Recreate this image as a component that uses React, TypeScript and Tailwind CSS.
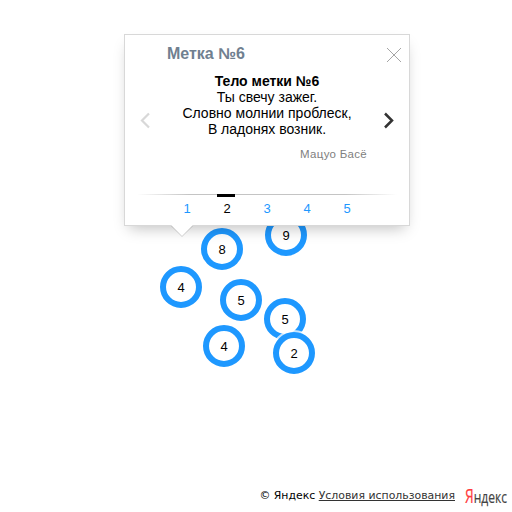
import React from 'react';

type Cluster = { x: number; y: number; count: number };

const clusters: Cluster[] = [
  { x: 286, y: 235, count: 9 },
  { x: 222, y: 249, count: 8 },
  { x: 181, y: 287, count: 4 },
  { x: 241, y: 300, count: 5 },
  { x: 285, y: 319, count: 5 },
  { x: 224, y: 346, count: 4 },
  { x: 294, y: 353, count: 2 },
];

function ClusterPin({ x, y, count }: Cluster) {
  return (
    <div
      className="absolute flex size-[42px] -translate-x-1/2 -translate-y-1/2 items-center justify-center rounded-full border-[6px] border-[#1e98ff] bg-white pt-px text-[13px] leading-none text-black shadow-[0_0_0_2px_rgba(255,255,255,0.75)]"
      style={{ left: x, top: y }}
    >
      {count}
    </div>
  );
}

function Pager() {
  return (
    <div className="mx-[12px]">
      <div className="h-px bg-[linear-gradient(to_right,transparent,#c4c4c4_20%,#c4c4c4_80%,transparent)]" />
      <ul className="flex justify-center text-[13px] leading-[15px]">
        {[1, 2, 3, 4, 5].map((n) => (
          <li key={n} className="flex w-10 flex-col items-center">
            <span className={n === 2 ? '-mt-px mr-[2px] h-[3px] w-[18px] bg-black' : '-mt-px h-[3px] w-[18px]'} />
            <span className={n === 2 ? 'mt-[4px] text-black' : 'mt-[4px] text-[#1e98ff]'}>{n}</span>
          </li>
        ))}
      </ul>
    </div>
  );
}

function Balloon() {
  return (
    <section className="absolute left-[124px] top-[34px] flex h-[192px] w-[286px] flex-col border border-[#d8d8d8] bg-white shadow-[0_7px_14px_-5px_rgba(0,0,0,0.26)]">
      <header className="flex h-[37px] items-start justify-between pl-[42px] pr-[8px]">
        <h1 className="pt-[9px] text-[16px] font-bold leading-[20px] text-[#708090]">Метка №6</h1>
        <svg className="mt-[13px]" width="14" height="14" viewBox="0 0 14 14" fill="none" stroke="#a5a5a5">
          <path d="M0 0L14 14M14 0L0 14" />
        </svg>
      </header>
      <div className="flex h-[122px] items-start">
        <div className="flex w-[42px] shrink-0 pl-[15px] pt-[40px]">
          <svg width="10" height="17" viewBox="0 0 10 17" fill="none" stroke="#d8d8d8" strokeWidth="2.2">
            <path d="M9 1.5L2 8.5L9 15.5" />
          </svg>
        </div>
        <div className="w-[200px] pt-px text-center text-[14px] leading-[16px] text-black">
          <p className="font-bold">Тело метки №6</p>
          <p>Ты свечу зажег.</p>
          <p className="whitespace-nowrap">Словно молнии проблеск,</p>
          <p>В ладонях возник.</p>
          <p className="mt-[9px] text-right text-[11.49px] tracking-[0.3px] text-[#808080]">Мацуо Басё</p>
        </div>
        <div className="flex w-[42px] shrink-0 justify-end pr-[15px] pt-[40px]">
          <svg width="10" height="17" viewBox="0 0 10 17" fill="none" stroke="#333" strokeWidth="2.5">
            <path d="M1 1.5L8 8.5L1 15.5" />
          </svg>
        </div>
      </div>
      <Pager />
      <svg className="absolute left-[46px] top-[190px]" width="22" height="12" viewBox="0 0 22 12">
        <path d="M0 0H22L11 11Z" fill="#fff" />
        <path d="M0 .5L11 11.5L22 .5" fill="none" stroke="#000" strokeOpacity=".16" />
      </svg>
    </section>
  );
}

export default function App() {
  return (
    <main className="relative flex h-[512px] w-[512px] flex-col justify-end overflow-hidden bg-white font-['Liberation_Sans',Arial,sans-serif]">
      {clusters.map((c) => (
        <ClusterPin key={`${c.x}-${c.y}`} {...c} />
      ))}
      <Balloon />
      <footer className="flex h-[26px] items-start justify-end pr-[4px] font-['DejaVu_Sans',Verdana,sans-serif] text-[10.9px] leading-[14px] text-black">
        <span className="mt-[3px] whitespace-pre">© Яндекс </span>
        <a className="mt-[3px] text-[#333] underline" href="#">Условия использования</a>
        <svg className="ml-[9px] overflow-visible" width="44" height="26" viewBox="0 0 44 26">
          <text x="1" y="16.5" fontFamily="'Open Sans','Noto Sans',sans-serif" fontSize="17" textLength="42" lengthAdjust="spacingAndGlyphs" fill="#444" stroke="#444" strokeWidth=".2">
            <tspan fontSize="19.5" fill="#ff3b40" stroke="#ff3b40">Я</tspan>ндекс
          </text>
        </svg>
      </footer>
    </main>
  );
}
